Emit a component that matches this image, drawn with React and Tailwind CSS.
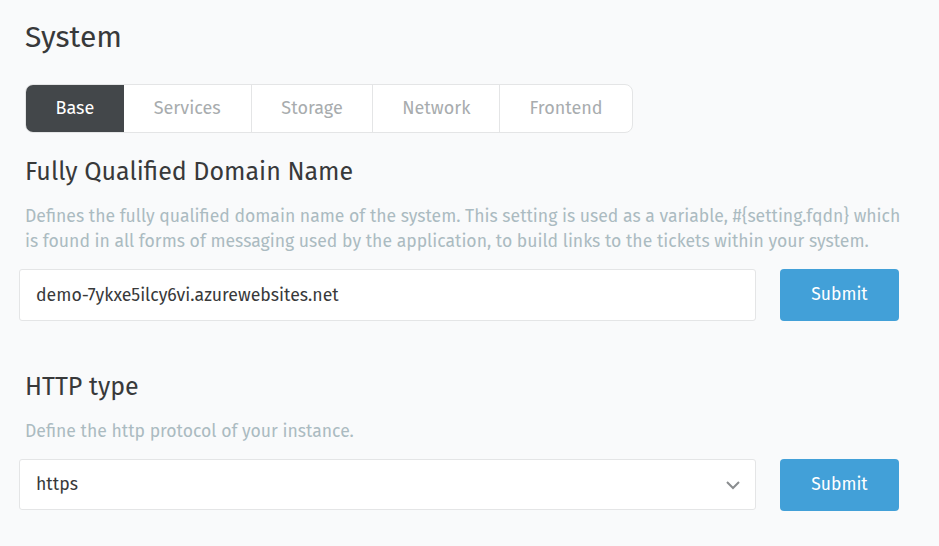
import React from "react";

const font = { fontFamily: "'Fira Sans', Roboto, 'Liberation Sans', sans-serif" };

function Submit() {
  return (
    <button className="w-[119px] h-[52px] shrink-0 rounded-[4px] bg-[#42a0d8] text-white text-[17.5px]">
      Submit
    </button>
  );
}

export default function App() {
  const tabs = ["Base", "Services", "Storage", "Network", "Frontend"];
  const widths = ["w-[98px]", "w-[127px]", "w-[122px]", "w-[127px]", "w-[133px]"];
  return (
    <div className="min-h-[546px] w-[939px] bg-[#f9fafb] text-[#38393a] pl-[25px] pt-[18px]" style={font}>
      <h1 className="text-[30px] leading-[38px] text-[#38393a]">System</h1>
      <div className="mt-[28px] flex h-[49px] w-[608px] rounded-[8px] border border-[#e4e5e6] bg-white overflow-hidden">
        {tabs.map((t, i) => (
          <div
            key={t}
            className={
              widths[i] +
              " flex items-center justify-center text-[18px] " +
              (i === 0
                ? "bg-[#43474a] text-white"
                : "text-[#a8acae] border-l border-[#e4e5e6]") +
              (i === 1 ? " border-l-0" : "")
            }
          >
            {t}
          </div>
        ))}
      </div>

      <h2 className="mt-[23px] text-[25px] leading-[32px]">Fully Qualified Domain Name</h2>
      <p className="mt-[16px] w-[885px] text-[17.6px] leading-[25px] text-[#abbbc1]">
        Defines the fully qualified domain name of the system. This setting is used as a variable, #&#123;setting.fqdn&#125; which is found in all forms of messaging used by the application, to build links to the tickets within your system.
      </p>
      <div className="mt-[15px] -ml-[6px] flex gap-[24px]">
        <div className="w-[737px] h-[52px] rounded-[3px] border border-[#e4e5e6] bg-white flex items-center pl-[16px] text-[17.7px] text-[#38393a]">
          demo-7ykxe5ilcy6vi.azurewebsites.net
        </div>
        <Submit />
      </div>

      <h2 className="mt-[50px] text-[25px] leading-[32px]">HTTP type</h2>
      <p className="mt-[16px] text-[17.6px] leading-[25px] text-[#abbbc1]">Define the http protocol of your instance.</p>
      <div className="mt-[15px] -ml-[6px] flex gap-[24px]">
        <div className="w-[737px] h-[51px] rounded-[3px] border border-[#e4e5e6] bg-white flex items-center justify-between pl-[16px] pr-[14px] text-[17.7px] text-[#38393a]">
          <span>https</span>
          <svg width="16" height="10" viewBox="0 0 16 10" fill="none">
            <path d="M2 2 L8 8 L14 2" stroke="#8a8d8f" strokeWidth="2" />
          </svg>
        </div>
        <Submit />
      </div>
    </div>
  );
}
